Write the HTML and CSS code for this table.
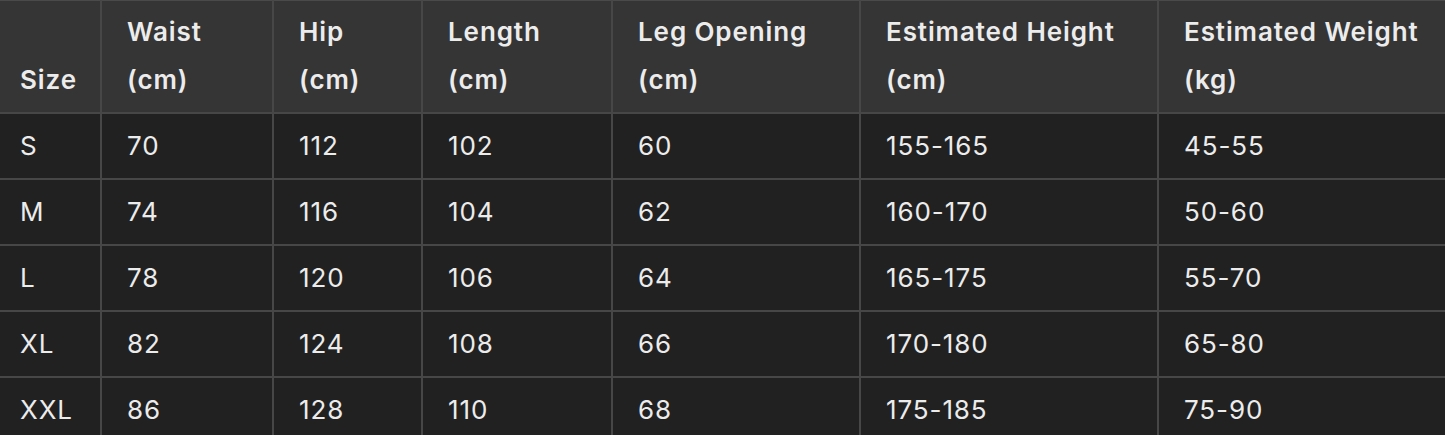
FILE: index.html
```html
<!DOCTYPE html>
<html lang="en">
<head>
<meta charset="utf-8">
<title>Size chart</title>
<link rel="stylesheet" href="styles.css">
</head>
<body>
<div class="wrap">
<table class="chart">
  <colgroup>
    <col class="c1"><col class="c2"><col class="c3"><col class="c4"><col class="c5"><col class="c6"><col class="c7">
  </colgroup>
  <thead>
    <tr>
      <th>Size</th>
      <th>Waist<br>(cm)</th>
      <th>Hip<br>(cm)</th>
      <th>Length<br>(cm)</th>
      <th>Leg Opening<br>(cm)</th>
      <th>Estimated Height<br>(cm)</th>
      <th>Estimated Weight<br>(kg)</th>
    </tr>
  </thead>
  <tbody>
    <tr><td>S</td><td>70</td><td>112</td><td>102</td><td>60</td><td>155-165</td><td>45-55</td></tr>
    <tr><td>M</td><td>74</td><td>116</td><td>104</td><td>62</td><td>160-170</td><td>50-60</td></tr>
    <tr><td>L</td><td>78</td><td>120</td><td>106</td><td>64</td><td>165-175</td><td>55-70</td></tr>
    <tr><td>XL</td><td>82</td><td>124</td><td>108</td><td>66</td><td>170-180</td><td>65-80</td></tr>
    <tr><td>XXL</td><td>86</td><td>128</td><td>110</td><td>68</td><td>175-185</td><td>75-90</td></tr>
  </tbody>
</table>
</div>
</body>
</html>
```

FILE: styles.css
```css
html, body {
  margin: 0;
  padding: 0;
  background: #212121;
  overflow: hidden;
}

.wrap {
  width: 1445px;
  height: 435px;
  overflow: hidden;
}

.chart {
  border-collapse: collapse;
  table-layout: fixed;
  width: 1445px;
  font-family: Inter, "Liberation Sans", sans-serif;
  font-size: 26px;
  line-height: 48px;
  letter-spacing: 0.9px;
  color: #ececec;
}

.c1 { width: 101px; }
.c2 { width: 172px; }
.c3 { width: 149px; }
.c4 { width: 190px; }
.c5 { width: 248px; }
.c6 { width: 298px; }
.c7 { width: 287px; }

.chart th,
.chart td {
  border: 2px solid #474747;
  text-align: left;
  padding: 0 0 0 25px;
  white-space: nowrap;
}

.chart th:first-child,
.chart td:first-child {
  border-left: none;
  padding-left: 20px;
}

.chart th:last-child,
.chart td:last-child {
  border-right: none;
}

.chart thead th {
  background: #353535;
  font-weight: 600;
  vertical-align: bottom;
  height: 95px;
  padding-top: 7px;
  padding-bottom: 8px;
  border-top: 1px solid #4a4a4a;
}

.chart tbody td {
  background: #212121;
  font-weight: 400;
  height: 64px;
  vertical-align: middle;
  padding-top: 0;
  padding-bottom: 0;
}
```
